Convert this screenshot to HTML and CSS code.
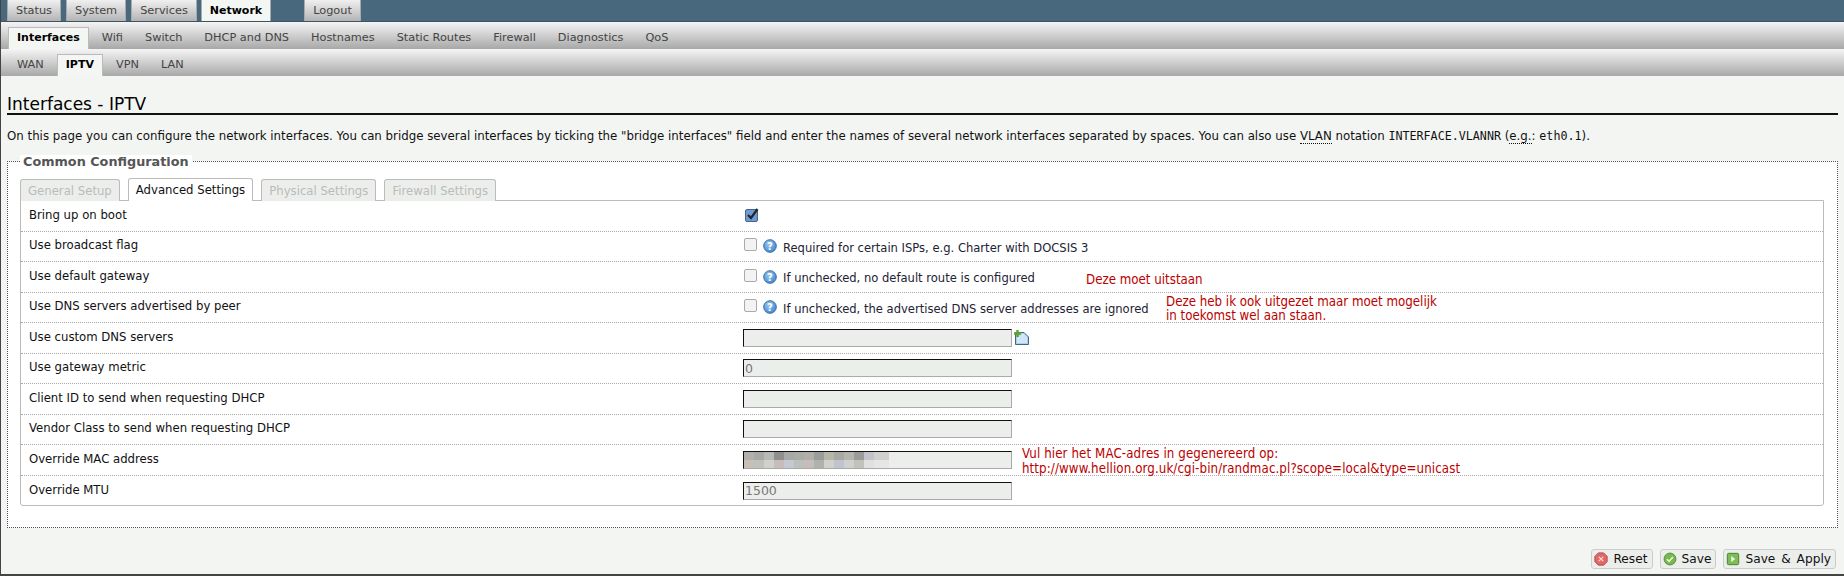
FILE: index.html
```html
<!DOCTYPE html>
<html lang="en">
<head>
<meta charset="utf-8">
<title>Interfaces - IPTV</title>
<link rel="stylesheet" href="styles.css">
</head>
<body>
<div class="page">
  <header class="topbar">
    <nav class="main-tabs">
      <a class="main-tab">Status</a>
      <a class="main-tab">System</a>
      <a class="main-tab">Services</a>
      <a class="main-tab active">Network</a>
      <a class="main-tab logout">Logout</a>
    </nav>
  </header>
  <nav class="subbar first">
    <a class="subtab active">Interfaces</a>
    <a class="subtab">Wifi</a>
    <a class="subtab">Switch</a>
    <a class="subtab">DHCP and DNS</a>
    <a class="subtab">Hostnames</a>
    <a class="subtab">Static Routes</a>
    <a class="subtab">Firewall</a>
    <a class="subtab">Diagnostics</a>
    <a class="subtab">QoS</a>
  </nav>
  <nav class="subbar second">
    <a class="subtab">WAN</a>
    <a class="subtab active">IPTV</a>
    <a class="subtab">VPN</a>
    <a class="subtab">LAN</a>
  </nav>
  <main class="content">
    <h2 class="title">Interfaces - IPTV</h2>
    <p class="intro">On this page you can configure the network interfaces. You can bridge several interfaces by ticking the "bridge interfaces" field and enter the names of several network interfaces separated by spaces. You can also use <abbr class="abbr">VLAN</abbr> notation <code class="mono">INTERFACE.VLANNR</code> (<abbr class="abbr">e.g.</abbr>: <code class="mono">eth0.1</code>).</p>

    <section class="fieldset">
      <h3 class="legend">Common Configuration</h3>
      <div class="section-tabs">
        <a class="stab">General Setup</a>
        <a class="stab active">Advanced Settings</a>
        <a class="stab">Physical Settings</a>
        <a class="stab">Firewall Settings</a>
      </div>
      <div class="panel">
        <div class="row">
          <label class="label">Bring up on boot</label>
          <div class="value">
            <svg class="check-on" width="15" height="15" viewBox="0 0 15 15"><defs><radialGradient id="helpfill" cx="0.4" cy="0.35" r="0.7"><stop offset="0" stop-color="#9cc8ee"/><stop offset="1" stop-color="#3f86cf"/></radialGradient></defs><rect x="1.500" y="2.500" width="12" height="12" rx="1.500" fill="#6f9bd0" stroke="#47658a"/><path d="M4 8l3 3 6.500-9" fill="none" stroke="#22262b" stroke-width="2.200"/></svg>
          </div>
        </div>
        <div class="row">
          <label class="label">Use broadcast flag</label>
          <div class="value">
            <input class="check" type="checkbox">
            <svg class="help" width="14" height="14" viewBox="0 0 14 14"><circle cx="7" cy="7" r="6.300" fill="url(#helpfill)" stroke="#3a6ea5"/><text x="7" y="10.500" text-anchor="middle" class="help-q">?</text></svg>
            <span class="hint">Required for certain ISPs, e.g. Charter with DOCSIS 3</span>
          </div>
        </div>
        <div class="row">
          <label class="label">Use default gateway</label>
          <div class="value">
            <input class="check" type="checkbox">
            <svg class="help" width="14" height="14" viewBox="0 0 14 14"><circle cx="7" cy="7" r="6.300" fill="url(#helpfill)" stroke="#3a6ea5"/><text x="7" y="10.500" text-anchor="middle" class="help-q">?</text></svg>
            <span class="hint">If unchecked, no default route is configured</span>
          </div>
          <span class="note note-gateway">Deze moet uitstaan</span>
        </div>
        <div class="row">
          <label class="label">Use DNS servers advertised by peer</label>
          <div class="value">
            <input class="check" type="checkbox">
            <svg class="help" width="14" height="14" viewBox="0 0 14 14"><circle cx="7" cy="7" r="6.300" fill="url(#helpfill)" stroke="#3a6ea5"/><text x="7" y="10.500" text-anchor="middle" class="help-q">?</text></svg>
            <span class="hint">If unchecked, the advertised DNS server addresses are ignored</span>
          </div>
          <span class="note note-dns">Deze heb ik ook uitgezet maar moet mogelijk<br>in toekomst wel aan staan.</span>
        </div>
        <div class="row">
          <label class="label">Use custom DNS servers</label>
          <div class="value">
            <input class="field" type="text">
            <svg class="add" width="15" height="16" viewBox="0 0 15 16"><path d="M1.500 2.500h8.500l4.500 4.500v7.500h-13z" fill="#a9d0f2" stroke="#4b6478"/><path d="M3 13V8l5-4h2l3 3v6z" fill="#cfe5f8"/><path d="M3.500 0v7M0 3.500h7" stroke="#5da330" stroke-width="2.400"/></svg>
          </div>
        </div>
        <div class="row">
          <label class="label">Use gateway metric</label>
          <div class="value"><input class="field" type="text" placeholder="0"></div>
        </div>
        <div class="row">
          <label class="label">Client ID to send when requesting DHCP</label>
          <div class="value"><input class="field" type="text"></div>
        </div>
        <div class="row">
          <label class="label">Vendor Class to send when requesting DHCP</label>
          <div class="value"><input class="field" type="text"></div>
        </div>
        <div class="row">
          <label class="label">Override MAC address</label>
          <div class="value mac-cell">
            <input class="field" type="text">
            <svg class="mosaic" width="145" height="16" viewBox="0 0 145 16" shape-rendering="crispEdges">
              <rect x="0" y="0" width="10" height="8" fill="#b0b0ac"/><rect x="10" y="0" width="10" height="8" fill="#a8a8a5"/><rect x="20" y="0" width="10" height="8" fill="#b8b8b4"/><rect x="30" y="0" width="10" height="8" fill="#8f8f8d"/><rect x="40" y="0" width="10" height="8" fill="#a8a8a5"/><rect x="50" y="0" width="10" height="8" fill="#abaca8"/><rect x="60" y="0" width="10" height="8" fill="#b0b0ab"/><rect x="70" y="0" width="10" height="8" fill="#9c9c9a"/><rect x="80" y="0" width="10" height="8" fill="#b8b6a8"/><rect x="90" y="0" width="10" height="8" fill="#a8a9a4"/><rect x="100" y="0" width="10" height="8" fill="#b5b5b0"/><rect x="110" y="0" width="10" height="8" fill="#9b9b99"/><rect x="120" y="0" width="10" height="8" fill="#c2c2cc"/><rect x="130" y="0" width="15" height="8" fill="#d0d0ce"/>
              <rect x="0" y="8" width="10" height="8" fill="#c8c0b4"/><rect x="10" y="8" width="10" height="8" fill="#c0c0bc"/><rect x="20" y="8" width="10" height="8" fill="#d0d0cc"/><rect x="30" y="8" width="10" height="8" fill="#c6bcbc"/><rect x="40" y="8" width="10" height="8" fill="#c4c8d0"/><rect x="50" y="8" width="10" height="8" fill="#bcc0bc"/><rect x="60" y="8" width="10" height="8" fill="#c6bcbc"/><rect x="70" y="8" width="10" height="8" fill="#b0b2ae"/><rect x="80" y="8" width="10" height="8" fill="#d0d0cc"/><rect x="90" y="8" width="10" height="8" fill="#c0c4cc"/><rect x="100" y="8" width="10" height="8" fill="#d0d0d0"/><rect x="110" y="8" width="10" height="8" fill="#c0c2bc"/><rect x="120" y="8" width="10" height="8" fill="#e0e0de"/><rect x="130" y="8" width="15" height="8" fill="#e6e6e4"/>
            </svg>
          </div>
          <span class="note note-mac">Vul hier het MAC-adres in gegenereerd op:<br>http://www.hellion.org.uk/cgi-bin/randmac.pl?scope=local&amp;type=unicast</span>
        </div>
        <div class="row">
          <label class="label">Override MTU</label>
          <div class="value"><input class="field" type="text" placeholder="1500"></div>
        </div>
      </div>
    </section>

    <div class="actions">
      <button class="btn" type="button">
        <svg width="14" height="14" viewBox="0 0 16 16"><path d="M5 1h6l4 4v6l-4 4H5l-4-4V5z" fill="#e06a6a" stroke="#b23c3c"/><path d="M5.500 5.500l5 5m0-5l-5 5" stroke="#f7d9d9" stroke-width="1.400"/></svg>
        Reset
      </button>
      <button class="btn" type="button">
        <svg width="14" height="14" viewBox="0 0 16 16"><circle cx="8" cy="8" r="6.800" fill="#79b84f" stroke="#4d8a2e"/><path d="M4.500 8.300l2.400 2.400 4.500-5" fill="none" stroke="#eef7e6" stroke-width="1.800"/></svg>
        Save
      </button>
      <button class="btn" type="button">
        <svg width="14" height="14" viewBox="0 0 16 16"><rect x="1.500" y="1.500" width="13" height="13" rx="1.500" fill="#7cbd55" stroke="#3f7a26"/><path d="M6 4.500l4.500 3.500L6 11.500z" fill="#f0f8e8"/></svg>
        Save &amp; Apply
      </button>
    </div>
  </main>
</div>
</body>
</html>
```
FILE: styles.css
```css
* { box-sizing: border-box; }
html, body { margin: 0; padding: 0; }
body { font-family: "DejaVu Sans", sans-serif; font-size: 11px; color: #111; background: #f3f5f3; }
.page { width: 1844px; height: 576px; display: flex; flex-direction: column; border-left: 1px solid #444; border-bottom: 2px solid #444; overflow: hidden; }

.topbar { height: 22px; background: #48687e; flex: none; border-bottom: 1px solid #3c5464; }
.main-tabs { display: flex; padding-left: 6px; gap: 5px; }
.main-tab { height: 21px; padding: 4px 8px 0; color: #444; font-size: 11.3px; background: linear-gradient(#f0f0f0, #b4b4b4); border: 1px solid #aaa; border-bottom: 0; border-top: 0; }
.main-tab.active { background: #f4f6f4; color: #000; font-weight: bold; margin-left: -1px; padding: 4px 8px 0; font-size: 11px; }
.main-tab.logout { margin-left: 28px; }

.subbar { flex: none; height: 27px; display: flex; align-items: flex-end; padding-left: 7px; background: linear-gradient(#f4f5f4, #a8a8a8); }
.subtab { height: 22px; padding: 4px 9px 0; margin-right: 4px; color: #444; font-size: 11.3px; }
.subtab.active { background: #f4f6f4; color: #000; font-weight: bold; border: 1px solid #bbb; border-bottom: 0; padding: 3px 8px 0; font-size: 11px; }

.content { flex: 1; padding: 0 6px 0 6px; min-height: 0; }
.title { margin: 18px 0 0; height: 21px; font-size: 17px; line-height: 20px; font-weight: normal; color: #000; border-bottom: 2px solid #111; }
.intro { margin: 13px 0 0; height: 16px; font-size: 11.8px; line-height: 16px; white-space: nowrap; }
.mono { font-family: "DejaVu Sans Mono", monospace; font-size: 11.7px; }
.abbr { border-bottom: 1px dotted #111; }

.fieldset { position: relative; margin-top: 17px; height: 367px; width: 1831px; background: #fff; border: 1px dotted #555; padding: 15px 13px 0 12px; }
.legend { position: absolute; top: -7px; left: 12px; margin: 0; padding: 0 3px; background: #fff; font-size: 12.8px; line-height: 14px; font-weight: bold; color: #555; }
.section-tabs { display: flex; gap: 8px; height: 23px; align-items: flex-end; padding-top: 1px; }
.stab { height: 22px; padding: 4px 7px 0; background: #eceeec; color: #bbb; border: 1px solid #bbb; border-bottom: 0; border-radius: 3px 3px 0 0; font-size: 11.7px; margin-bottom: -1px; position: relative; }
.stab.active { height: 23px; background: #fff; color: #111; z-index: 1; }

.panel { border: 1px solid #bbb; border-radius: 0 0 3px 3px; height: 306px; background: #fff; }
.row { position: relative; display: grid; grid-template-columns: 722px 1fr; height: 30.5px; align-items: center; border-bottom: 1px dotted #aaa; }
.row:last-child { border-bottom: 0; }
.label { padding: 0 0 2px 8px; font-size: 11.7px; }
.value { display: flex; align-items: center; gap: 6px; }
.check { appearance: none; margin: 0 0 3px 1px; width: 13px; height: 13px; border: 1px solid #aaa; border-radius: 2px; background: #f2f3f2; flex: none; }
.check-on { margin: 0 0 3px 1px; }
.help { flex: none; }
.help-q { font-family: "DejaVu Sans", sans-serif; font-size: 10px; font-weight: bold; fill: #fff; }
.hint { font-size: 11.55px; color: #223; margin-top: 3px; white-space: nowrap; }
.field { width: 269px; height: 18px; margin: 0; padding: 0 1px; font: 12.5px "DejaVu Sans", sans-serif; background: #eceeec; border: 1px solid #aaa; border-top-color: #111; border-left-color: #111; }
.field::placeholder { color: #777; opacity: 1; }
.add { margin-left: -4px; flex: none; }
.mac-cell { position: relative; }
.mosaic { position: absolute; left: 1px; top: 1px; }

.note { position: absolute; color: #b00; font-size: 13.2px; line-height: 14.5px; font-family: "DejaVu Sans Condensed", "DejaVu Sans", sans-serif; white-space: nowrap; }
.note-gateway { left: 1065px; top: 11px; }
.note-dns { left: 1145px; top: 2px; }
.note-mac { left: 1001px; top: 2px; letter-spacing: 0.1px; }

.actions { display: flex; justify-content: flex-end; gap: 7px; padding: 21px 2px 0 0; }
.btn { display: flex; align-items: center; gap: 5px; height: 20px; padding: 0 4px 0 2px; font: 12.2px "DejaVu Sans", sans-serif; word-spacing: 2px; color: #111; background: #eceeec; border: 1px solid #ccc; border-radius: 3px; }
```
